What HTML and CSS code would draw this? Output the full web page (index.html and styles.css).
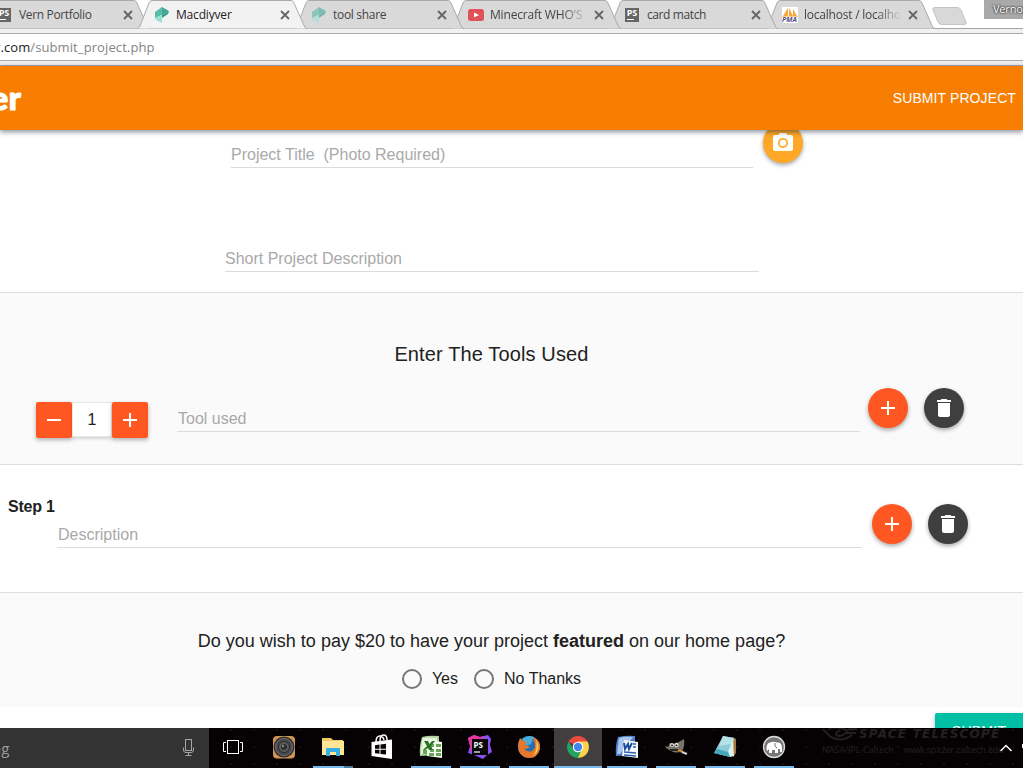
FILE: index.html
```
<!DOCTYPE html>
<html lang="en">
<head>
<meta charset="utf-8">
<title>Macdiyver</title>
<link rel="stylesheet" href="styles.css">
</head>
<body>
<svg class="defs" width="0" height="0">
  <symbol id="tab-shape" viewBox="0 0 170 29"><path d="M0 28.5 C1 28 1.500 27 2 26 L11 3 Q12 .5 14 .5 H153 Q155 .5 156 3 L166 25.500 Q167 28.5 169 28.5"/></symbol>
  <symbol id="close" viewBox="0 0 10 10"><path d="M1 1L9 9M9 1L1 9" stroke="#666" stroke-width="1.8"/></symbol>
  <symbol id="gem" viewBox="0 0 16 16"><path d="M1 5L8 0V8L1 11Z" fill="#5bbbaa"/><path d="M8 0L15 4L8 8Z" fill="#43a896"/><path d="M15 4L14 7L8 11V8Z" fill="#2f9f8c"/><path d="M1 11L8 8V16L2 13Z" fill="#9be0d3"/></symbol>
  <symbol id="plus" viewBox="0 0 24 24"><path d="M19 13h-6v6h-2v-6H5v-2h6V5h2v6h6z" fill="#fff"/></symbol>
  <symbol id="minus" viewBox="0 0 24 24"><path d="M5 11h14v2H5z" fill="#fff"/></symbol>
  <symbol id="trash" viewBox="0 0 24 24"><path d="M6 19c0 1.1.9 2 2 2h8c1.1 0 2-.9 2-2V7H6v12zM19 4h-3.500l-1-1h-5l-1 1H5v2h14V4z" fill="#fff"/></symbol>
</svg>

<div class="tabs">
  <div class="tab t1"><svg class="shape"><use href="#tab-shape"/></svg><span class="fav ps">PS</span><span class="title">Vern Portfolio</span><svg class="x"><use href="#close"/></svg></div>
  <div class="tab active"><svg class="shape"><use href="#tab-shape"/></svg><svg class="fav"><use href="#gem"/></svg><span class="title">Macdiyver</span><svg class="x"><use href="#close"/></svg></div>
  <div class="tab t3"><svg class="shape"><use href="#tab-shape"/></svg><svg class="fav pale"><use href="#gem"/></svg><span class="title">tool share</span><svg class="x"><use href="#close"/></svg></div>
  <div class="tab t4"><svg class="shape"><use href="#tab-shape"/></svg><svg class="fav" viewBox="0 0 16 16"><rect y="2" width="16" height="12" rx="2.500" fill="#e05257"/><path d="M6 5.500L11 8L6 10.500Z" fill="#fff"/></svg><span class="title fade">Minecraft WHO'S</span><svg class="x"><use href="#close"/></svg></div>
  <div class="tab t5"><svg class="shape"><use href="#tab-shape"/></svg><span class="fav ps">PS</span><span class="title">card match</span><svg class="x"><use href="#close"/></svg></div>
  <div class="tab t6"><svg class="shape"><use href="#tab-shape"/></svg><span class="fav pma"><svg viewBox="0 0 16 10"><path d="M1 9L6 1V9ZM7 9V1L11 9ZM11 9V2L15 9Z" fill="#f9a63a"/><path d="M0 9.500H16" stroke="#f4cf91"/></svg><i>PMA</i></span><span class="title fade">localhost / localho</span><svg class="x"><use href="#close"/></svg></div>
  <svg class="newtab" width="36" height="20"><path d="M3 1.500H25Q28 1.500 29 4L34 16Q35 18.500 32 18.500H10Q7 18.500 6 16L1 4Q0 1.500 3 1.500Z" fill="#d8d8d8" stroke="#c4c4c4"/></svg>
  <span class="user">Vernon</span>
</div>
<div class="toolbar"><div class="address"><b>r.com</b>/submit_project.php</div></div>

<header class="nav"><span class="logo">er</span><a class="navlink">SUBMIT PROJECT</a></header>

<main>
  <section class="intro">
    <div class="title-row">
      <div class="field f-title">Project Title&nbsp; (Photo Required)</div>
      <div class="fab amber"><svg width="24" height="24" viewBox="0 0 24 24"><path fill="#fff" fill-rule="evenodd" d="M9 2L7.170 4H4c-1.100 0-2 .9-2 2v12c0 1.100.9 2 2 2h16c1.100 0 2-.9 2-2V6c0-1.100-.9-2-2-2h-3.170L15 2H9zm3 15c-2.760 0-5-2.240-5-5s2.240-5 5-5 5 2.240 5 5-2.240 5-5 5z"/><circle cx="12" cy="12" r="3.300" fill="#fff"/></svg></div>
    </div>
    <div class="field f-short">Short Project Description</div>
  </section>

  <section class="tools">
    <h2>Enter The Tools Used</h2>
    <div class="tool-row">
      <div class="counter"><span class="sq"><svg width="24" height="24"><use href="#minus"/></svg></span><span class="count">1</span><span class="sq"><svg width="24" height="24"><use href="#plus"/></svg></span></div>
      <div class="field f-tool">Tool used</div>
      <div class="fab red"><svg width="24" height="24"><use href="#plus"/></svg></div>
      <div class="fab dark"><svg width="24" height="24"><use href="#trash"/></svg></div>
    </div>
  </section>

  <section class="steps">
    <div class="step-main"><strong>Step 1</strong><div class="field f-step">Description</div></div>
    <div class="fab red"><svg width="24" height="24"><use href="#plus"/></svg></div>
    <div class="fab dark"><svg width="24" height="24"><use href="#trash"/></svg></div>
  </section>

  <section class="feature">
    <p>Do you wish to pay $20 to have your project <b>featured</b> on our home page?</p>
    <div class="radios"><span class="radio"></span><label>Yes</label><span class="radio"></span><label>No Thanks</label></div>
  </section>
  <div class="bottom"><span class="submit">SUBMIT</span></div>
</main>

<footer class="taskbar">
  <div class="search"><span>ng</span><svg width="13" height="18" viewBox="0 0 13 18" fill="none" stroke="#a5a5a5"><rect x="3.500" y=".5" width="6" height="11"/><path d="M1.500 8.500V11Q1.500 13.500 4 13.500H9Q11.500 13.500 11.500 11V8.500M6.500 13.500V16M3.500 16.500H9.500"/></svg></div>
  <div class="slot view"><svg width="22" height="16" viewBox="0 0 22 16" fill="none" stroke="#fff"><rect x="5.500" y="1.500" width="11" height="13"/><path d="M4 3.500H1.500V12.500H4M18 3.500H20.500V12.500H18"/></svg></div>
  <div class="slot"><svg width="24" height="24" viewBox="0 0 24 24"><rect x="1" y="1" width="22" height="22.500" rx="4" fill="#d09656"/><circle cx="12" cy="12" r="10.500" fill="#333"/><circle cx="12" cy="12" r="8.500" fill="#484848" stroke="#717171"/><circle cx="12" cy="12" r="5.500" fill="#5d5d5d" stroke="#2b2b2b"/><circle cx="12" cy="12" r="3" fill="#2a2d30"/><circle cx="11" cy="11" r="1.200" fill="#888"/></svg></div>
  <div class="slot open split"><svg width="24" height="24" viewBox="0 0 24 24"><path d="M1 3H10L12 5H22V20H1Z" fill="#f1c761"/><path d="M1 6H23V20H1Z" fill="#ffe595"/><path d="M5 21V14Q5 13 6 13H18Q19 13 19 14V21H15V17H9V21Z" fill="#35afe2"/></svg></div>
  <div class="slot"><svg width="24" height="26" viewBox="0 0 24 26"><path d="M6 8Q6 2 10 2Q13 2 14 6M10 7Q10 1 13.500 1Q17 1 17 6" fill="none" stroke="#fff" stroke-width="1.500"/><path d="M1.500 8L22 5.500V25L1.500 22Z" fill="#fff"/><path d="M5 11.200L9.500 10.600V14.700H5ZM10.500 10.500L16 9.800V14.700H10.500ZM5 15.700H9.500V19.800L5 19.200ZM10.500 15.700H16V20.600L10.500 19.900Z" fill="#080304"/></svg></div>
  <div class="slot open"><svg width="24" height="24" viewBox="0 0 24 24"><path d="M3 2Q10 0 20 1V20L1 21Q0 12 3 2Z" fill="#aed29a"/><path d="M4 3Q12 2 18 3V19H2Q2 9 4 3Z" fill="#e7f2df"/><path d="M10 5L23 7V23L8 21Z" fill="#f7fbf4"/><path d="M11 9h4v3h-4zM17 9h5v3h-5zM11 14h4v3h-4zM17 14h5v3h-5zM10 18h5v3h-5zM17 18h5v3h-5zM4 15h4v4H4z" fill="#65a856"/><path d="M5 6H9L10.500 9L13 6H16L12 11L14 15H10L9 13L6 15H4L8 11Z" fill="#287426"/></svg></div>
  <div class="slot open"><svg width="26" height="26" viewBox="0 0 26 26"><path d="M1 4L7 1L13 3L21 1L24 5L23 11L25 18L20 21L16 25L7 21L1 19L3 12Z" fill="#8950f4"/><path d="M1 4L7 1L13 3L17 2L4 17L3 12Z" fill="#e8369a"/><rect x="5" y="5" width="16" height="16" fill="#090909"/><text x="6.500" y="14" class="pst">PS</text><path d="M7 18H13" stroke="#fff" stroke-width="1.200"/></svg></div>
  <div class="slot open"><svg width="24" height="24" viewBox="0 0 24 24"><circle cx="12" cy="12" r="11" fill="#236fb4"/><path d="M5 4Q11 -1 17 2L14 9L9 11Z" fill="#4babd8"/><path d="M3 3L6 6L10 7L8 10L13 12Q10 15 7 13Q10 18 15 16Q20 13 17 6L16 2Q24 5 23 14Q20 24 11 23Q1 21 1 11Q1 7 3 3Z" fill="#e7772b"/><path d="M19 5Q25 14 16 21Q21 14 19 5Z" fill="#f9d348"/></svg></div>
  <div class="slot open current"><svg width="24" height="24" viewBox="0 0 24 24"><path d="M12 12L2.500 6.500A11 11 0 0 1 21.500 6.500Z" fill="#e94b3f"/><path d="M12 12V6.500H21.500A11 11 0 0 1 12 23Z" fill="#fdd24b"/><path d="M2.500 6.500L8 15L16 14L12 23A11 11 0 0 1 2.500 6.500Z" fill="#25a363"/><circle cx="12" cy="12" r="5.300" fill="#fff"/><circle cx="12" cy="12" r="4.200" fill="#4285ed"/></svg></div>
  <div class="slot open"><svg width="24" height="24" viewBox="0 0 24 24"><path d="M3 2Q12 0 20 1V20L1 21Q0 11 3 2Z" fill="#4f7fca"/><path d="M4 3Q10 1 18 2L5 19H2Z" fill="#a9c6ed"/><path d="M9 5L23 7V23L7 21Z" fill="#f5f8fd"/><path d="M9 8L10 14L13 9L14 14L17 8" fill="none" stroke="#1d4e9b" stroke-width="2"/><path d="M18 9H21M18 12H21M9 17L21 18M9 20L21 21" stroke="#2f5fae" stroke-width="1.500"/></svg></div>
  <div class="slot open"><svg width="24" height="24" viewBox="0 0 24 24"><path d="M1 11L4 12L6 8L10 9L13 8L20 4Q21 12 18 16Q13 19 7 16L2 13Z" fill="#77746b"/><circle cx="8" cy="10" r="2" fill="#ddd"/><circle cx="12.500" cy="10" r="2.200" fill="#ddd"/><circle cx="8" cy="10.300" r=".9" fill="#111"/><circle cx="12.500" cy="10.300" r=".9" fill="#111"/><path d="M6 15L14 15L22 19" fill="none" stroke="#292620" stroke-width="2"/><path d="M14 15L19 17" stroke="#d88c36" stroke-width="2"/><path d="M18 17L23 19" stroke="#ccc" stroke-width="2"/></svg></div>
  <div class="slot open"><svg width="24" height="24" viewBox="0 0 24 24"><path d="M19 2L23 4V18L20 22Z" fill="#a87938"/><path d="M10 1L21 3L17 22L1 18Z" fill="#8bcbd5"/><path d="M10 1L21 3L19 9L6 11Z" fill="#b5e0e5"/><path d="M20 4L21 21L17 22L15 17Z" fill="#dceff0"/><path d="M1 18L17 22L15 17L4 14Z" fill="#41a9b8"/></svg></div>
  <div class="slot open"><svg width="24" height="24" viewBox="0 0 24 24"><circle cx="12" cy="12" r="10.500" fill="#777" stroke="#ddd" stroke-width="1.300"/><path d="M4.500 15Q4 8 8 7.500Q12 6 15 7.500Q20 7 20 13V17H18V14L16 14V18H13V15H10V18H7V14L5 16Z" fill="#fff"/><path d="M13 8Q12 12 15 13" fill="none" stroke="#777"/></svg></div>
  <div class="wall"><div class="brand"><svg width="35" height="13" viewBox="0 0 36 13" fill="none" stroke="#222020" stroke-width="2"><path d="M1 1L9 9Q20 15 31 7M7 1Q15 -3 27 3M19 2Q12 5 16 8Q22 8 25 4M27 1H36M25 5H35"/></svg><b>SPACE TELESCOPE</b></div><div class="credit"><span>NASA/JPL-Caltech</span><span>www.spitzer.caltech.edu</span></div></div>
  <svg class="chevron" width="23" height="12" viewBox="0 0 23 12" fill="none"><path d="M.5 8L6 2.500L11.500 8" stroke="#fff" stroke-width="1.500"/><path d="M22.500 1V5" stroke="#fff"/></svg>
</footer>
</body>
</html>
```
FILE: styles.css
```
* { box-sizing: border-box; }
body { margin: 0; width: 1023px; height: 768px; overflow: hidden; display: flex; flex-direction: column; background: #fff; color: #212121; font: 16px "Liberation Sans", Arial, sans-serif; }
svg { display: block; flex: none; }
.defs { position: absolute; }

/* browser chrome */
.tabs { height: 29px; flex: none; display: flex; align-items: flex-start; position: relative; border-bottom: 1px solid #a6a6a6; background: #fff; font: 12px "Open Sans", "Noto Sans", sans-serif; }
.tab { position: relative; flex: none; width: 157px; height: 29px; display: flex; align-items: center; padding-left: 16px; color: #444; }
.shape { position: absolute; left: 0; top: 0; width: 170px; height: 29px; fill: #d9d9d9; stroke: #aaa; z-index: 0; }
.active .shape { fill: #f2f2f2; }
.t1 { margin-left: -19px; z-index: 6; }
.t1 .title { letter-spacing: -.35px; }
.active { z-index: 9; color: #222; }
.t3 { z-index: 5; } .t4 { z-index: 4; } .t5 { z-index: 3; } .t6 { z-index: 2; }
.fav { position: relative; width: 16px; height: 16px; flex: none; }
.pale { opacity: .6; }
.ps { width: 14px; height: 14px; margin-right: 2px; background: #666; color: #fff; font: bold 9px/9px "Open Sans", sans-serif; text-align: center; }
.ps::after { content: ""; display: block; width: 7px; height: 1px; margin: 2px 0 0 2px; background: #fff; }
.pma { background: #fff; }
.pma svg { width: 16px; height: 10px; }
.pma i { display: block; font: italic bold 7px/6px "Open Sans", sans-serif; color: #55558c; }
.title { position: relative; width: 98px; margin-left: 6px; white-space: nowrap; letter-spacing: -.18px; }
.t5 .title { letter-spacing: -.4px; }
.t3 .title { letter-spacing: -.3px; }
.t6 .title { letter-spacing: -.22px; }
.fade { -webkit-mask-image: linear-gradient(90deg, #000 72px, transparent 98px); mask-image: linear-gradient(90deg, #000 72px, transparent 98px); }
.x { position: relative; width: 10px; height: 10px; margin-left: 6px; }
.newtab { margin: 6px 0 0 9px; }
.user { margin-left: auto; width: 39px; height: 19px; padding-left: 9px; overflow: hidden; background: #a9a9a9; color: #fff; font-size: 11px; line-height: 17px; letter-spacing: -.2px; text-shadow: 0 0 2px #222, 0 0 2px #222; }
.toolbar { height: 37px; flex: none; padding: 4px 0; background: #f2f0f2; border-bottom: 1px solid #a8a8ac; }
.address { height: 28px; background: #fff; border: solid #aaa; border-width: 1px 0; color: #848484; font: 13px/27px "Open Sans", "Noto Sans", sans-serif; letter-spacing: .1px; text-indent: -5px; white-space: nowrap; }
.address b { font-weight: 400; color: #222; }

/* page header */
.nav { position: relative; z-index: 3; height: 64px; flex: none; display: flex; align-items: center; justify-content: space-between; padding-right: 7px; background: #f77e00; color: #fff; box-shadow: 0 2px 5px rgba(0,20,50,.35), 0 1px 6px rgba(0,20,50,.2); }
.logo { margin: 0 0 0 -9px; font: 900 32px/36px Lato, sans-serif; -webkit-text-stroke: 1.2px #fff; letter-spacing: .5px; }
.navlink { font-size: 14px; letter-spacing: .1px; }

/* form */
main { flex: 1; min-height: 0; overflow: hidden; }
.field { height: 26px; border-bottom: 1px solid #dcdcdc; color: #a9a9a9; line-height: 26px; white-space: nowrap; }
.fab { flex: none; width: 40px; height: 40px; border-radius: 50%; display: flex; align-items: center; justify-content: center; box-shadow: 0 2px 4px rgba(0,0,0,.35); }
.amber { background: #ffa726; }
.red { background: #ff5722; }
.dark { background: #3f3f3f; }
.intro { height: 163px; padding: 12px 0 0; border-bottom: 1px solid #ddd; }
.title-row { display: flex; gap: 10px; padding-left: 231px; height: 78px; }
.f-title { width: 522px; }
.amber { margin-top: -19px; }
.f-short { margin: 26px 0 0 225px; width: 534px; }
.tools { height: 172px; padding: 50px 0 0; background: #fafafa; border-bottom: 1px solid #ddd; }
h2 { margin: 0 42px 0 2px; font-size: 20px; line-height: 23px; font-weight: 400; text-align: center; letter-spacing: .13px; }
.tool-row { display: flex; padding: 22px 0 0 36px; }
.counter { display: flex; margin-top: 14px; height: 36px; }
.sq { width: 36px; height: 36px; border-radius: 2px; display: flex; align-items: center; justify-content: center; background: #ff5722; box-shadow: 0 2px 4px rgba(0,0,0,.3); }
.count { width: 40px; height: 35px; line-height: 34px; text-align: center; background: #fff; border: 1px solid #e6e6e6; box-shadow: 0 2px 3px rgba(0,0,0,.15); }
.f-tool { width: 683px; margin: 18px 8px 0 29px; padding-left: 1px; }
.tool-row .dark, .steps .dark { margin-left: 16px; }
.steps { height: 128px; display: flex; padding: 39px 0 0 8px; border-bottom: 1px solid #ddd; }
.step-main { width: 864px; margin-top: -7px; line-height: 20px; }
.step-main strong { letter-spacing: -.2px; }
.f-step { width: 805px; margin: 5px 0 0 49px; padding-left: 1px; }
.step-main .f-step { line-height: 26px; }
.feature { height: 114px; padding: 37px 40px 0 0; background: #fafafa; text-align: center; font-size: 18px; }
.feature p { margin: 0; line-height: 22px; white-space: nowrap; }
.radios { display: flex; justify-content: center; align-items: center; height: 20px; margin-top: 17px; font-size: 16px; }
.radio { width: 20px; height: 20px; margin-right: 10px; border: 2px solid #757575; border-radius: 50%; }
label + .radio { margin-left: 16px; }
.bottom { display: flex; justify-content: flex-end; padding-top: 6px; }
.submit { width: 88px; height: 36px; border-radius: 2px 0 0 2px; background: #00bfa5; color: #fff; font-size: 14px; line-height: 36px; text-align: center; letter-spacing: .25px; box-shadow: 0 2px 5px rgba(0,0,0,.3); }

/* desktop taskbar */
.taskbar { position: relative; z-index: 5; flex: none; height: 40px; display: flex; gap: 1px; background: radial-gradient(circle at 1px 2px, #1a1316 0 .6px, transparent 1px) 0 0 / 23px 17px, #060203; }
.search { width: 209px; margin-right: -1px; padding: 0 14px 0 0; display: flex; align-items: center; justify-content: space-between; background: #333; color: #9b9b9b; font: 15px "Open Sans", sans-serif; }
.search span { margin-left: -8px; }
.slot { width: 48px; height: 40px; display: flex; align-items: center; justify-content: center; flex: none; border: solid transparent; border-width: 0 4px 2px; }
.view { margin-right: 2px; }
.open { background: linear-gradient(#76b9ed, #76b9ed) 4px 100% / 40px 2px no-repeat border-box; }
.split { background-image: linear-gradient(90deg, #76b9ed 31px, #4c7ba0 31px); }
.current { background-color: #413e3f; background-size: 48px 2px; background-position: 0 100%; }
.pst { font: bold 8px "Open Sans", sans-serif; fill: #fff; }
.wall { margin-left: 23px; width: 180px; height: 40px; color: #222020; font-family: "Open Sans", sans-serif; white-space: nowrap; }
.brand { display: flex; height: 14px; font: italic bold 12px/12px "DejaVu Sans", sans-serif; letter-spacing: 1.2px; gap: 2px; }
.credit { display: flex; gap: 10px; font-size: 9px; line-height: 15px; letter-spacing: -.08px; }
.chevron { position: absolute; left: 1000px; top: 15px; }
```
